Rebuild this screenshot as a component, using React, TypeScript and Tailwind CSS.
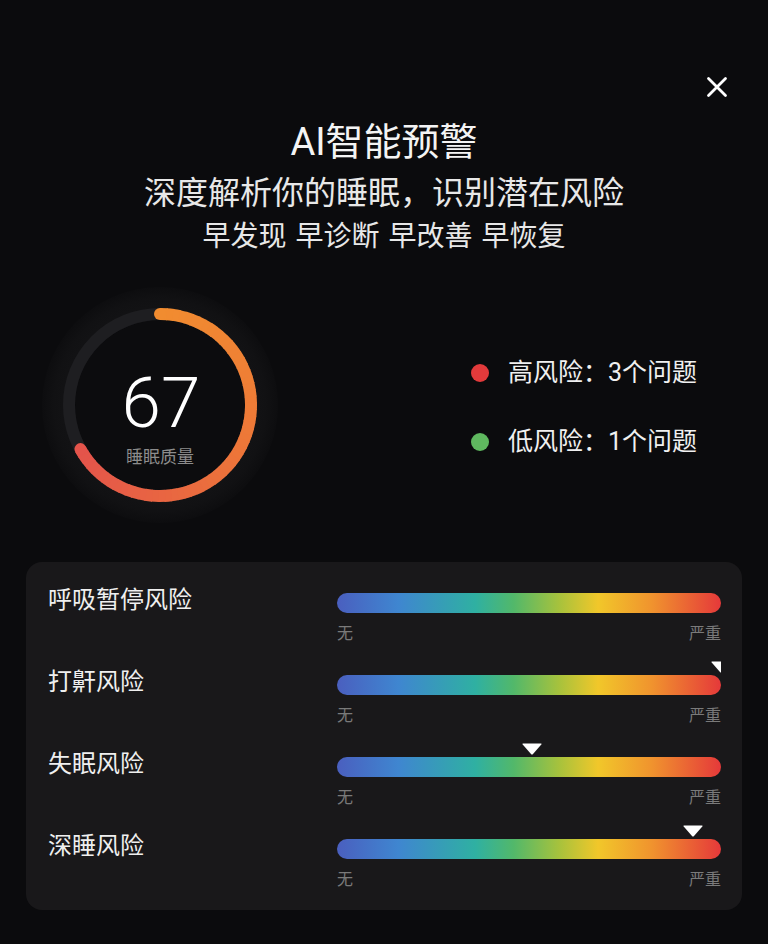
import React from "react";

const FONT = { fontFamily: '"Roboto", "Noto Sans CJK SC", sans-serif' };

function lerp(a: number, b: number, t: number) {
  return Math.round(a + (b - a) * t);
}

function Ring() {
  const cx = 118;
  const cy = 118;
  const r = 91;
  const total = 241;
  const N = 60;
  const c0 = [241, 140, 48];
  const c1 = [237, 118, 57];
  const c2 = [228, 84, 75];
  const pt = (deg: number) => {
    const a = (deg * Math.PI) / 180;
    return [cx + r * Math.sin(a), cy - r * Math.cos(a)];
  };
  const col = (t: number) => {
    const [a, b, tt] = t < 0.5 ? [c0, c1, t / 0.5] : [c1, c2, (t - 0.5) / 0.5];
    return `rgb(${lerp(a[0], b[0], tt)},${lerp(a[1], b[1], tt)},${lerp(a[2], b[2], tt)})`;
  };
  const segs = [];
  for (let i = 0; i < N; i++) {
    const d0 = (total * i) / N;
    const d1 = Math.min(total, (total * (i + 1)) / N + 0.6);
    const [x0, y0] = pt(d0);
    const [x1, y1] = pt(d1);
    segs.push(
      <path
        key={i}
        d={`M ${x0} ${y0} A ${r} ${r} 0 0 1 ${x1} ${y1}`}
        stroke={col(i / (N - 1))}
        strokeWidth={12}
        fill="none"
      />
    );
  }
  const [sx, sy] = pt(0);
  const [ex, ey] = pt(total);
  return (
    <svg width="236" height="236" viewBox="0 0 236 236">
      <defs>
        <radialGradient id="glow" cx="50%" cy="50%" r="50%">
          <stop offset="70%" stopColor="#141416" />
          <stop offset="90%" stopColor="#111113" />
          <stop offset="100%" stopColor="#0d0d0f" />
        </radialGradient>
      </defs>
      <circle cx={cx} cy={cy} r={118} fill="url(#glow)" />
      <circle cx={cx} cy={cy} r={85} fill="#0c0c0e" />
      <circle cx={cx} cy={cy} r={r} stroke="#1e1e21" strokeWidth={12} fill="none" />
      {segs}
      <circle cx={sx} cy={sy} r={6} fill={col(0)} />
      <circle cx={ex} cy={ey} r={6} fill={col(1)} />
    </svg>
  );
}

const rows: { label: string; pct: number | null }[] = [
  { label: "呼吸暂停风险", pct: null },
  { label: "打鼾风险", pct: 100 },
  { label: "失眠风险", pct: 50.8 },
  { label: "深睡风险", pct: 92.7 },
];

function Marker() {
  return (
    <svg width="20" height="12" viewBox="0 0 20 12" className="block">
      <path d="M1 0.5 L19 0.5 Q20 0.5 19.3 1.5 L10.8 11.2 Q10 12 9.2 11.2 L0.7 1.5 Q0 0.5 1 0.5 Z" fill="#ffffff" />
    </svg>
  );
}

export default function App() {
  return (
    <div className="w-[768px] h-[944px] bg-[#0b0b0d] text-white overflow-hidden" style={FONT}>
      <div className="flex justify-end pt-[76px] pr-[40px]">
        <svg width="22" height="22" viewBox="0 0 22 22">
          <path d="M2.5 2.5 L19.5 19.5 M19.5 2.5 L2.5 19.5" stroke="#ffffff" strokeWidth="2.8" strokeLinecap="round" />
        </svg>
      </div>
      <div className="mt-[20px] text-center text-[38px] leading-[48px] text-[#f4f4f4]">AI智能预警</div>
      <div className="mt-[5px] text-center text-[32px] leading-[44px] text-[#e8e8e8]">
        深度解析你的睡眠，识别潜在风险
      </div>
      <div className="mt-[0px] text-center text-[28px] leading-[44px] text-[#e8e8e8] [word-spacing:2px]">
        早发现 早诊断 早改善 早恢复
      </div>

      <div className="mt-[28px] flex items-center pl-[42px]">
        <div className="relative w-[236px] h-[236px]">
          <Ring />
          <div className="absolute inset-0 flex flex-col items-center pt-[81px]">
            <div className="text-[71px] leading-[70px] font-light text-white ml-[2px]">67</div>
            <div className="text-[17px] leading-[24px] text-[#8c8c8c] mt-[7px]">睡眠质量</div>
          </div>
        </div>
        <div className="ml-[193px] mt-[4px] flex flex-col gap-[37px]">
          <div className="flex items-center">
            <span className="w-[18px] h-[18px] rounded-full bg-[#e33a3b]" />
            <span className="ml-[19px] text-[25px] leading-[32px] text-[#f0f0f0]">高风险：3个问题</span>
          </div>
          <div className="flex items-center">
            <span className="w-[18px] h-[18px] rounded-full bg-[#5fb85f]" />
            <span className="ml-[19px] text-[25px] leading-[32px] text-[#f0f0f0]">低风险：1个问题</span>
          </div>
        </div>
      </div>

      <div className="mt-[39px] mx-[26px] h-[348px] rounded-[16px] bg-[#19181a] pt-[17px] pl-[22px] pr-[21px] flex flex-col gap-[17px]">
        {rows.map((row) => (
          <div key={row.label} className="flex">
            <div className="flex-1 text-[24px] leading-[30px] mt-[6px] text-[#efefef]">{row.label}</div>
            <div className="w-[384px] overflow-hidden">
              <div className="relative h-[14px]">
                {row.pct !== null && (
                  <div
                    className="absolute top-0 -translate-x-1/2"
                    style={{ left: `${row.pct}%` }}
                  >
                    <Marker />
                  </div>
                )}
              </div>
              <div className="h-[20px] rounded-full bg-[linear-gradient(90deg,#4a5fbf_0%,#3f86d0_16%,#2fb0a2_36%,#52b86a_46%,#a8c23c_58%,#f1c72a_68%,#f0932e_82%,#e5393a_100%)]" />
              <div className="mt-[11px] flex justify-between text-[16px] leading-[20px] text-[#7a7a7a]">
                <span>无</span>
                <span>严重</span>
              </div>
            </div>
          </div>
        ))}
      </div>
    </div>
  );
}
